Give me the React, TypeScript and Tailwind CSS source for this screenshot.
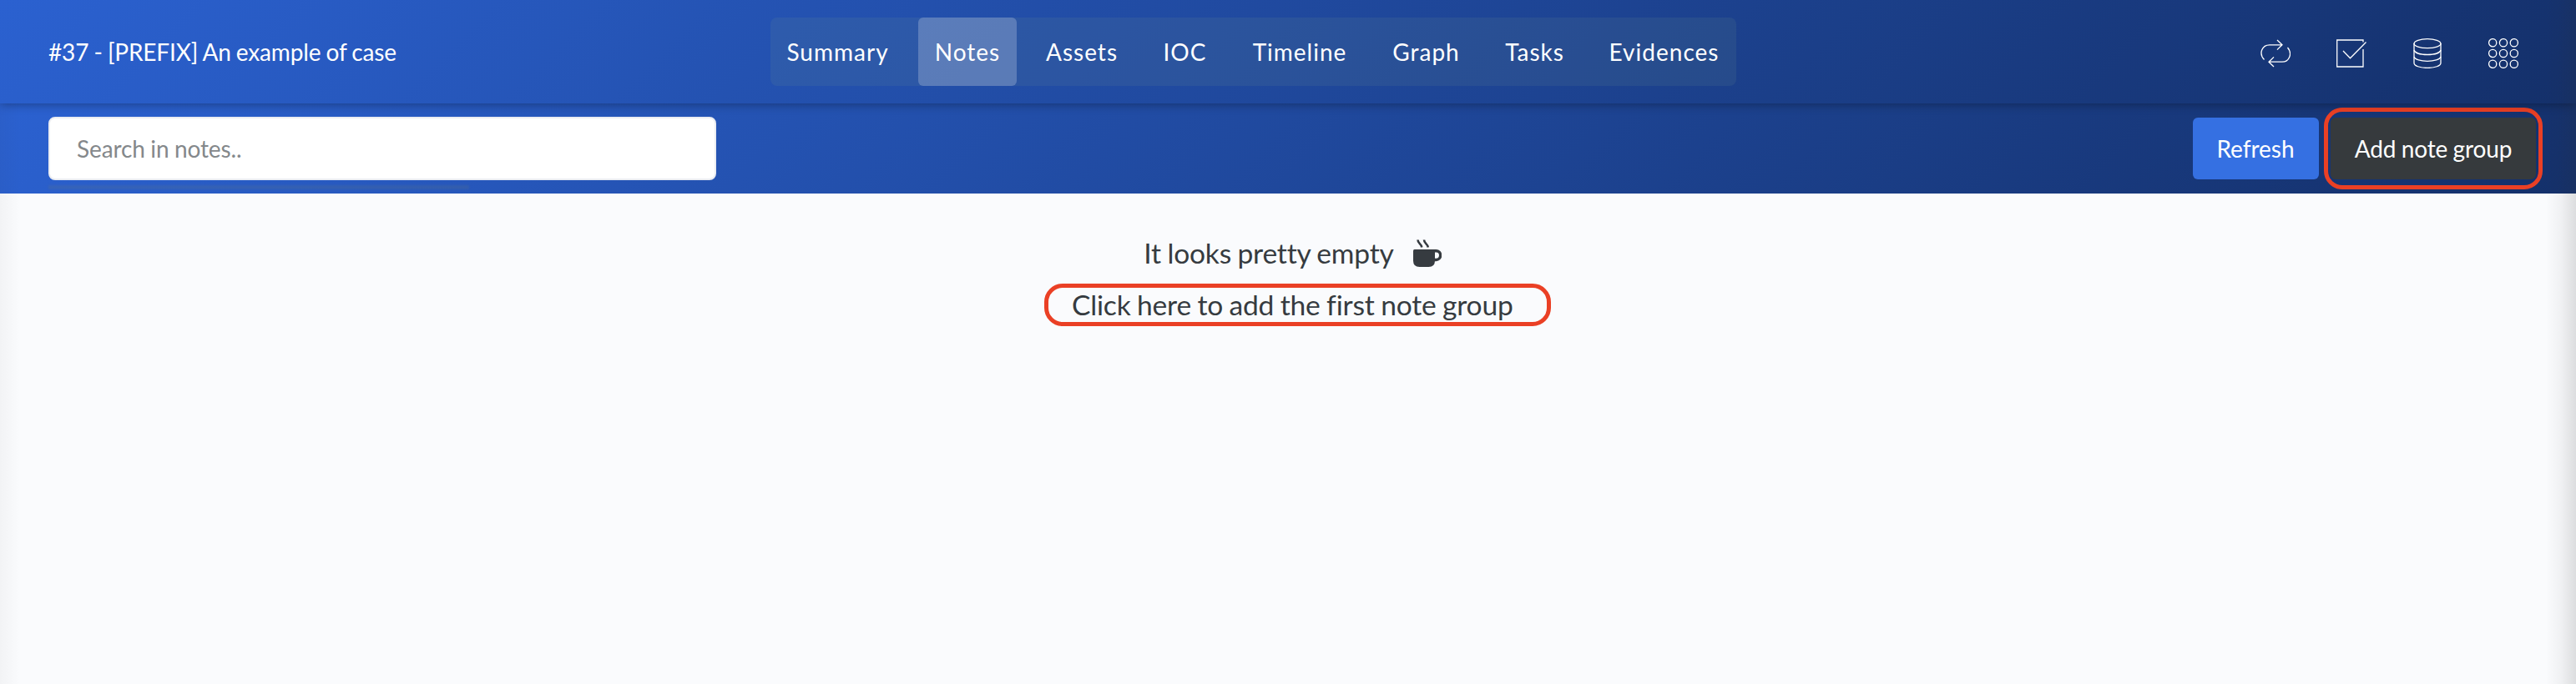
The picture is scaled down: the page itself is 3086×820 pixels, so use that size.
import React from "react";

const tabs = [
  { label: "Summary", width: "w-[157px] pl-[4px]" },
  { label: "Notes", width: "w-[118px]" },
  { label: "Assets", width: "w-[156px]" },
  { label: "IOC", width: "w-[92px] pr-px" },
  { label: "Timeline", width: "w-[182px]" },
  { label: "Graph", width: "w-[121px]" },
  { label: "Tasks", width: "w-[139px]" },
  { label: "Evidences", width: "w-[171px]" },
];

function LoopIcon() {
  return (
    <svg className="h-9 w-9" viewBox="0 0 36 36" fill="none" stroke="currentColor" strokeWidth="1.3">
      <path d="M4.500 25.500C-2.500 18 2 7.800 11 7.800H26M20 2L26 7.800L20 13.600" />
      <path d="M32.500 11C39 18.500 34 28.200 26 28.200H10M16 22.400L10 28.200L16 34" />
    </svg>
  );
}

function CheckIcon() {
  return (
    <svg className="h-9 w-9" viewBox="0 0 36 36" fill="none" stroke="currentColor" strokeWidth="1.3">
      <path d="M32 4.500V2H.7V34H32V13" />
      <path d="M8 15L16.500 23.800L35.500 4.500" />
    </svg>
  );
}

function DatabaseIcon() {
  return (
    <svg className="h-9 w-9" viewBox="0 0 36 36" fill="none" stroke="currentColor" strokeWidth="1.3">
      <ellipse cx="18" cy="6.200" rx="16" ry="5.500" />
      <path d="M2 6V29.500C2 33 9 35.400 18 35.400S34 33 34 29.500V6" />
      <path d="M2 14C3 17.500 10 19.500 18 19.500S33 17.500 34 14M2 22C3 25.300 10 27.300 18 27.300S33 25.300 34 22" />
    </svg>
  );
}

function GridIcon() {
  const stops = [5.2, 18, 30.8];
  return (
    <svg className="h-9 w-9" viewBox="0 0 36 36" fill="none" stroke="currentColor" strokeWidth="1.3">
      {stops.map((y) => stops.map((x) => <circle key={`${x}-${y}`} cx={x} cy={y} r="4.600" />))}
    </svg>
  );
}

function MugIcon() {
  return (
    <svg className="mt-[2px] h-[34px] w-[34px]" viewBox="0 0 34 34" fill="none" stroke="currentColor">
      <path d="M1.500 12H26V25.500Q26 33 18.500 33H7.500Q0 33 0 25.500V13.500Q0 12 1.500 12Z" fill="currentColor" stroke="none" />
      <path d="M25 13.700H27.500A4.800 5 0 0 1 27.500 24.500H25" strokeWidth="3.400" />
      <path d="M5.500 .5C5.500 5 9.800 5 10.300 9.500M13 .5C13 5 17.300 5 17.800 9.500" strokeWidth="2.600" />
    </svg>
  );
}

export default function App() {
  return (
    <div className="relative h-[820px] w-[3086px] overflow-hidden bg-[#fafbfd] font-['Lato',sans-serif]">
      <header className="relative z-10 flex h-[124px] items-center bg-linear-[135deg,#2b61d0_0%,#14306a_100%] text-white shadow-[0_1px_11px_rgba(0,0,0,0.35)]">
        <h1 className="w-[923px] shrink-0 pl-[58px] text-[28px] leading-10 tracking-[-0.16px] [word-spacing:-0.8px]">#37 - [PREFIX] An example of case</h1>
        <nav className="flex h-[82px] w-[1157px] shrink-0 items-center rounded-lg bg-[#7ba08d]/12 text-[28px] tracking-[1px]">
          <div className="flex h-full">
            {tabs.map((t) => (
              <a key={t.label} className={`flex h-full items-center justify-center ${t.width} ${t.label === "Notes" ? "ml-5 rounded-md bg-white/22" : ""}`}>
                {t.label}
              </a>
            ))}
          </div>
        </nav>
        <div className="ml-auto flex items-center gap-[55px] pt-[3px] pr-[69px]">
          <LoopIcon />
          <CheckIcon />
          <DatabaseIcon />
          <GridIcon />
        </div>
      </header>
      <section className="relative flex h-[108px] items-center justify-between bg-linear-[135deg,#2b61d0_0%,#14306a_100%] pr-[40px] pl-[58px]">
        <input className="h-[76px] w-[800px] rounded-lg border-2 border-[#ebedf2] bg-white px-8 text-[28px] tracking-[-0.1px] [word-spacing:-0.6px] placeholder:text-[#84888b]" placeholder="Search in notes.." />
        <div className="absolute bottom-[5px] left-[58px] h-[5px] w-[504px] bg-[#6b7a78]/20 blur-[1px]" />
        <div className="flex items-center gap-[6px]">
          <button className="h-[74px] w-[151px] rounded-md bg-[#3570e2] pr-px text-[28px] text-white">Refresh</button>
          <div className="flex h-[98px] w-[262px] items-center justify-center rounded-[22px] border-[5px] border-[#ea4025]">
            <button className="h-[74px] w-[246px] rounded-md bg-[#363a3d] text-[28px] tracking-[-0.12px] text-white [word-spacing:-0.8px]">Add note group</button>
          </div>
        </div>
      </section>
      <main className="flex flex-col items-center pt-[52px] text-[33.6px] leading-[38px] tracking-[-0.2px] text-[#363b40] [word-spacing:-0.9px]">
        <p className="ml-[11px] flex h-[38px] items-center gap-[23px]">It looks pretty empty <MugIcon /></p>
        <p className="mt-[18px] ml-[23px] flex h-[51px] w-[607px] items-center rounded-[22px] border-[5px] border-[#ea4025] pb-[2px] pl-[28px]">Click here to add the first note group</p>
      </main>
      <div className="pointer-events-none absolute inset-y-0 right-0 z-20 w-9 bg-linear-[to_left,rgba(50,50,50,0.15)_0%,rgba(50,50,50,0.05)_50%,rgba(50,50,50,0)_100%]" />
      <div className="pointer-events-none absolute top-[124px] bottom-0 left-0 z-20 w-6 bg-linear-[to_right,rgba(50,50,50,0.04)_0%,rgba(50,50,50,0)_100%]" />
    </div>
  );
}
